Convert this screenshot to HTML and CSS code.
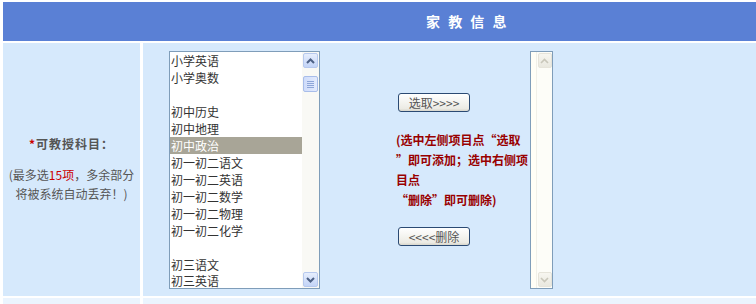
FILE: index.html
```html
<!DOCTYPE html>
<html lang="zh-CN">
<head>
    <meta charset="UTF-8">
    <meta name="viewport" content="width=device-width, initial-scale=1.0">
    <title>家教信息</title>
    <link rel="stylesheet" href="styles.css">
</head>
<body>
    <div class="form-table">
        <div class="head">家 教 信 息</div>

        <div class="label-cell">
            <div class="label"><span class="req">*</span>可教授科目：</div>
            <div class="note">(最多选<span class="red">15项</span>，多余部分<br>将被系统自动丢弃！)</div>
        </div>

        <div class="pick-cell">
            <!-- 左侧：可选科目 -->
            <div class="listbox wide">
                <ul class="options">
                    <li>小学英语</li>
                    <li>小学奥数</li>
                    <li></li>
                    <li>初中历史</li>
                    <li>初中地理</li>
                    <li class="selected">初中政治</li>
                    <li>初一初二语文</li>
                    <li>初一初二英语</li>
                    <li>初一初二数学</li>
                    <li>初一初二物理</li>
                    <li>初一初二化学</li>
                    <li></li>
                    <li>初三语文</li>
                    <li class="last">初三英语</li>
                </ul>
                <div class="vscroll">
                    <div class="sb-btn">
                        <svg width="9" height="6" viewBox="0 0 9 6"><path d="M1 5 L4.5 1.5 L8 5" fill="none" stroke="#4d6185" stroke-width="2"/></svg>
                    </div>
                    <div class="sb-thumb"><i></i><i></i><i></i><i></i></div>
                    <div class="sb-track"></div>
                    <div class="sb-btn">
                        <svg width="9" height="6" viewBox="0 0 9 6"><path d="M1 1 L4.5 4.5 L8 1" fill="none" stroke="#4d6185" stroke-width="2"/></svg>
                    </div>
                </div>
            </div>

            <!-- 中间：操作按钮 -->
            <div class="actions">
                <button class="btn">选取&gt;&gt;&gt;&gt;</button>
                <p class="hint">(选中左侧项目点“选取<br>”即可添加；选中右侧项<br>目点<br>“删除”即可删除)</p>
                <button class="btn">&lt;&lt;&lt;&lt;删除</button>
            </div>

            <!-- 右侧：已选科目 -->
            <div class="listbox narrow">
                <div class="empty"></div>
                <div class="vscroll off">
                    <div class="sb-btn">
                        <svg width="9" height="6" viewBox="0 0 9 6"><path d="M1 5 L4.5 1.5 L8 5" fill="none" stroke="#c9c7ba" stroke-width="1.6"/></svg>
                    </div>
                    <div class="sb-track"></div>
                    <div class="sb-btn">
                        <svg width="9" height="6" viewBox="0 0 9 6"><path d="M1 1 L4.5 4.5 L8 1" fill="none" stroke="#c9c7ba" stroke-width="1.6"/></svg>
                    </div>
                </div>
            </div>
        </div>

        <div class="foot-cell"></div>
        <div class="foot-cell"></div>
    </div>
</body>
</html>
```

FILE: styles.css
```css
/* 页面基础 */
body {
    margin: 0;
    background-color: #fff;
    font-family: "Noto Sans CJK SC", "Liberation Sans", sans-serif;
    font-size: 12px;
    color: #333;
}

/* 表格布局（单元格间留白线） */
.form-table {
    display: grid;
    grid-template-columns: 137px 1fr;
    grid-template-rows: 39px 253px 1fr;
    gap: 2px 3px;
    padding: 2px 0 0 3px;
    height: 100vh;
    box-sizing: border-box;
    background-color: #fff;
}

/* 标题栏 */
.head {
    grid-column: 1 / 3;
    background-color: #5a80d5;
    color: #fff;
    font-size: 14px;
    font-weight: bold;
    line-height: 39px;
    padding-left: 423px;
    word-spacing: 5px;
}

/* 左侧标签 */
.label-cell {
    background-color: #d6e9fc;
    display: flex;
    flex-direction: column;
    justify-content: center;
    align-items: center;
    text-align: center;
    padding-bottom: 2px;
}

.label {
    font-weight: bold;
    color: #555;
    line-height: 20px;
    letter-spacing: 1px;
}

.req {
    color: #cc0000;
}

.note {
    margin-top: 11px;
    color: #555;
    line-height: 19px;
}

.red {
    color: #cc0000;
}

/* 右侧选择区域 */
.pick-cell {
    background-color: #d6e9fc;
    display: flex;
    align-items: flex-start;
    padding: 8px 0 0 26px;
}

/* 列表框 */
.listbox {
    display: flex;
    height: 238px;
    box-sizing: border-box;
    border: 1px solid #7f9db9;
    background-color: #fff;
}

.listbox.wide {
    width: 151px;
}

.listbox.narrow {
    width: 23px;
    background-color: #fffef6;
}

.options {
    list-style: none;
    margin: 0;
    padding: 0;
    width: 132px;
}

.options li {
    height: 17px;
    line-height: 17px;
    padding-left: 1px;
    color: #333;
    white-space: nowrap;
}

.options li.last {
    height: 15px;
    line-height: 15px;
}

.options li.selected {
    background-color: #a8a597;
    color: #fff;
}

.empty {
    width: 5px;
}

/* 滚动条 */
.vscroll {
    width: 17px;
    display: flex;
    flex-direction: column;
    align-items: center;
    padding: 1px 0;
    box-sizing: border-box;
    background-color: #f9f9f5;
}

.vscroll.off {
    width: 16px;
    background-color: #fdfdf8;
    border-left: 1px solid #f1f0e8;
}

.sb-btn {
    width: 15px;
    height: 15px;
    box-sizing: border-box;
    border: 1px solid #b7c9ee;
    border-radius: 2px;
    background: linear-gradient(#e6eefd, #c3d4f7);
    display: flex;
    align-items: center;
    justify-content: center;
}

.vscroll.off .sb-btn {
    width: 14px;
    border-color: #e6e4da;
    background: linear-gradient(#f7f6f0, #e9e8df);
}

.sb-thumb {
    width: 15px;
    height: 16px;
    margin-top: 8px;
    box-sizing: border-box;
    border: 1px solid #a8bdea;
    border-radius: 2px;
    background: linear-gradient(90deg, #cfdcfa, #e3ebfd);
    display: flex;
    flex-direction: column;
    align-items: center;
    justify-content: center;
    gap: 1px;
}

.sb-thumb i {
    display: block;
    width: 7px;
    height: 1px;
    background-color: #8ea6d8;
}

.sb-track {
    flex-grow: 1;
}

/* 中间按钮与说明 */
.actions {
    width: 134px;
    margin-left: 76px;
    padding-top: 42px;
    display: flex;
    flex-direction: column;
    align-items: flex-start;
}

.btn {
    width: 72px;
    height: 19px;
    margin-left: 2px;
    padding: 0;
    border: 1px solid #2b4a73;
    border-radius: 3px;
    background: linear-gradient(#ffffff, #ecebe4 85%, #d8d6cc);
    color: #555;
    font-family: "Noto Sans CJK SC", "Liberation Sans", sans-serif;
    font-size: 12px;
    line-height: 17px;
    cursor: pointer;
}

.hint {
    margin: 18px 0 17px;
    color: #990000;
    font-weight: bold;
    line-height: 20px;
    white-space: nowrap;
}

/* 下一行 */
.foot-cell {
    background-color: #ebf4fe;
}
```
